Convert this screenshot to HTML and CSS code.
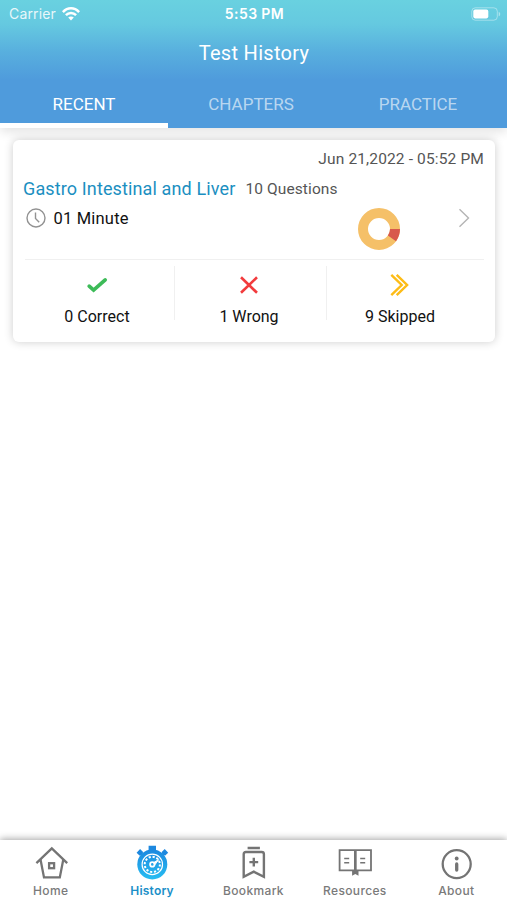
FILE: index.html
```html
<!DOCTYPE html>
<html lang="en">
<head>
<meta charset="utf-8">
<meta name="viewport" content="width=device-width, initial-scale=1">
<title>Test History</title>
<link rel="stylesheet" href="styles.css">
</head>
<body>
<div class="app">
  <header class="header">
    <div class="status">
      <div class="carrier"><span class="carrier-name">Carrier</span>
        <svg width="18" height="14" viewBox="0 0 18 14" fill="none" stroke="#fff" stroke-width="2.5"><path d="M.9 5.1C5.6.1 12.4.1 17.1 5.1M3.9 8.2c2.9-3 7.3-3 10.2 0"/><path d="M9 13.5 6.2 10.6c1.6-1.5 4-1.5 5.6 0z" fill="#fff" stroke="none"/></svg>
      </div>
      <div class="clock">5:53 PM</div>
      <svg class="battery" width="30" height="14" viewBox="0 0 30 14"><rect x=".8" y=".8" width="25.5" height="12.4" rx="3.5" fill="none" stroke="#fff" stroke-opacity=".4"/><rect x="2.3" y="2.6" width="15" height="8.8" rx="1.8" fill="#fff"/><path d="M27.7 4.7c2 .8 2 3.8 0 4.6z" fill="#fff" fill-opacity=".45"/></svg>
    </div>
    <h1 class="title">Test History</h1>
    <nav class="tabs">
      <div class="tab active">RECENT</div>
      <div class="tab">CHAPTERS</div>
      <div class="tab">PRACTICE</div>
    </nav>
  </header>
  <main class="content">
    <article class="card">
      <div class="date">Jun 21,2022 - 05:52 PM</div>
      <div class="subject"><span class="name">Gastro Intestinal and Liver</span><span class="count">10 Questions</span></div>
      <div class="summary">
        <svg class="time-icon" width="20" height="20" viewBox="0 0 20 20" fill="none" stroke="#929292" stroke-width="1.4"><circle cx="10" cy="10" r="9"/><path d="M9.5 4.5v6l3.7 3.7"/></svg>
        <span class="duration">01 Minute</span>
        <svg class="donut" width="42" height="42" viewBox="0 0 42 42"><circle cx="21" cy="21" r="16" fill="none" stroke="#f5c068" stroke-width="10"/><path d="M42 21A21 21 0 0 1 38 33.3L29.9 27.5A11 11 0 0 0 32 21Z" fill="#d8594c"/></svg>
        <svg class="chevron" width="12" height="20" viewBox="0 0 12 20" fill="none" stroke="#b4b4b4" stroke-width="1.4"><path d="m1.5 1.3 9 8.7-9 8.7"/></svg>
      </div>
      <div class="results">
        <div class="result"><svg width="24" height="24" viewBox="0 0 24 24" fill="none" stroke="#3dbb58" stroke-width="3.7" stroke-linecap="round"><path d="m4.2 13.2 4.4 3.9L20.2 6.9"/></svg><span>0 Correct</span></div>
        <div class="result"><svg width="24" height="24" viewBox="0 0 24 24" fill="none" stroke="#f23b3d" stroke-width="2.6"><path d="m4 4.3 16 15.5M20 4.3 4 19.8"/></svg><span>1 Wrong</span></div>
        <div class="result"><svg width="24" height="24" viewBox="0 0 24 24" fill="none" stroke="#fdbc16" stroke-width="2.4"><path d="m3.3 1.9 10.4 10.1-10.4 10.1M8.7 1.9l10.4 10.1-10.4 10.1"/></svg><span>9 Skipped</span></div>
      </div>
    </article>
  </main>
  <nav class="bottom">
    <div class="item"><svg width="36" height="36" viewBox="0 0 36 36" fill="none" stroke="#747474" stroke-width="2.3"><path d="M3 18.2 18.4 3.4l15.4 14.8M7.2 15l3.4 17.4h15.8L29.8 15"/><rect x="15.7" y="18.2" width="5" height="5"/></svg><span>Home</span></div>
    <div class="item selected"><svg width="36" height="36" viewBox="0 0 36 36" fill="none"><defs><linearGradient id="g" x2="0" y2="1"><stop stop-color="#1d88df"/><stop offset="1" stop-color="#26bdf2"/></linearGradient></defs><path d="M14.2.8h7.4v5h-7.4z" fill="#1d88df"/><path d="m3.8 9.2 3.5-3.6M28.7 5.6l3.5 3.6" stroke="#1d88df" stroke-width="4.5"/><path d="m6 8 4 4M30 8l-4 4" stroke="#1d88df" stroke-width="2.5"/><circle cx="17.9" cy="19.4" r="15" fill="url(#g)"/><circle cx="17.9" cy="19.4" r="10.2" stroke="#fff" stroke-width="1.2"/><circle cx="17.9" cy="19.4" r="7.6" stroke="#fff" stroke-width="2" stroke-dasharray="2.2 1.78"/><circle cx="17.9" cy="19.4" r="2.2" stroke="#fff" stroke-width="1.8"/><path d="m19 17.7 5.3-3.1-3.6 4.9z" fill="#fff" stroke="#fff"/></svg><span>History</span></div>
    <div class="item"><svg width="36" height="36" viewBox="0 0 36 36" fill="none" stroke="#747474" stroke-width="2.4"><path d="M12.2 3h12.3M8.3 31.8V9.2q0-2.2 2.2-2.2h15.8q2.2 0 2.2 2.2v22.6l-10.1-5.1zM18.4 12.8v8.6M14 17.1h8.8"/></svg><span>Bookmark</span></div>
    <div class="item"><svg width="36" height="36" viewBox="0 0 36 36" fill="none" stroke="#747474" stroke-width="1.8"><path d="M2.2 5.2h31.4v20.1H2.2zM17.9 5v21"/><path d="M17.9 6v19" stroke-width="2.6"/><path d="M6.8 13.5h5M6.8 17.8h5M22.8 13.5h5M22.8 17.8h5" stroke-width="1.5"/><path d="M14.7 25h6.4v5.7l-3.2-1.8-3.2 1.8z" fill="#747474" stroke="none"/></svg><span>Resources</span></div>
    <div class="item"><svg width="36" height="36" viewBox="0 0 36 36" fill="none" stroke="#747474" stroke-width="2.3"><circle cx="18.3" cy="19.1" r="14"/><circle cx="18.3" cy="13.5" r="1.9" fill="#747474" stroke="none"/><path d="M18.3 18.9v6.1" stroke-width="3.3" stroke-linecap="round"/></svg><span>About</span></div>
  </nav>
</div>
</body>
</html>
```
FILE: styles.css
```css
* { box-sizing: border-box; }
body { margin: 0; background: #fff; font-family: Roboto, sans-serif; }
svg { display: block; flex: none; }
.app { display: flex; flex-direction: column; height: 900px; overflow: hidden; }
.header {
  height: 128px;
  background: linear-gradient(#69d1e0 0, #65c9e0 24px, #58afde 52px, #4f9bdc 80px, #4f9bdc 100%);
  color: #fff;
  box-shadow: 0 4px 10px rgba(0, 0, 0, .11);
}
.status {
  display: grid;
  grid-template-columns: 1fr auto 1fr;
  align-items: center;
  height: 27px;
  padding: 0 6px 0 9px;
  font-family: Inter, sans-serif;
}
.carrier { display: flex; align-items: center; gap: 6px; }
.carrier-name { font-size: 14px; letter-spacing: .15px; opacity: .85; }
.clock { font-size: 14px; font-weight: 600; letter-spacing: .4px; margin-right: 1px; }
.battery { justify-self: end; }
.title { margin: 0; height: 53px; line-height: 52px; text-align: center; font-size: 20px; font-weight: 400; letter-spacing: .3px; text-indent: 1px; }
.tabs { display: grid; grid-template-columns: 168px 166px 168px; grid-template-rows: 48px; }
.tab { line-height: 48px; text-align: center; font-size: 17px; color: rgba(255, 255, 255, .62); }
.tab.active { color: #fff; border-bottom: 5px solid #fff; }
.content { flex: 1; padding: 12px 12px 0 13px; }
.card { height: 202px; padding: 8px 11px 0 10px; border-radius: 6px; background: #fff; box-shadow: 0 0 10px rgba(0, 0, 0, .2); }
.date { height: 22px; line-height: 23px; text-align: right; font-size: 15.5px; letter-spacing: .14px; color: #555; }
.subject { display: flex; align-items: center; gap: 10px; height: 37px; }
.name { font-size: 18px; letter-spacing: .13px; color: #1b8fc1; }
.count { font-size: 15.5px; letter-spacing: .1px; color: #555; }
.summary { display: flex; align-items: flex-start; height: 53px; margin-left: 2px; border-bottom: 1px solid #f0f0f0; }
.time-icon { margin: 1px 0 0 1px; }
.duration { margin-left: 7.5px; line-height: 24px; font-size: 16.5px; letter-spacing: .2px; color: #111; }
.donut { margin: .5px 0 0 auto; }
.chevron { margin: 1px 14px 0 58.5px; }
.results { display: grid; grid-template-columns: 151px 152px 150px; padding-top: 6px; }
.result { display: flex; flex-direction: column; align-items: center; gap: 8px; height: 54px; padding: 7px 3px 0 0; font-size: 16px; line-height: 23px; color: #111; white-space: nowrap; }
.result + .result { border-left: 1px solid #f0f0f0; }
.bottom { display: grid; grid-template-columns: repeat(5, 1fr); height: 60px; padding-top: 5px; box-shadow: 0 -1px 7px rgba(0, 0, 0, .36); background: #fff; }
.item { display: flex; flex-direction: column; align-items: center; font-family: Inter, sans-serif; font-size: 12px; font-weight: 500; letter-spacing: .35px; line-height: 20px; color: #7a7a7a; }
.item svg { transform: translateX(.4px); }
.selected { color: #1b8fc8; font-weight: 600; letter-spacing: .2px; }
```
